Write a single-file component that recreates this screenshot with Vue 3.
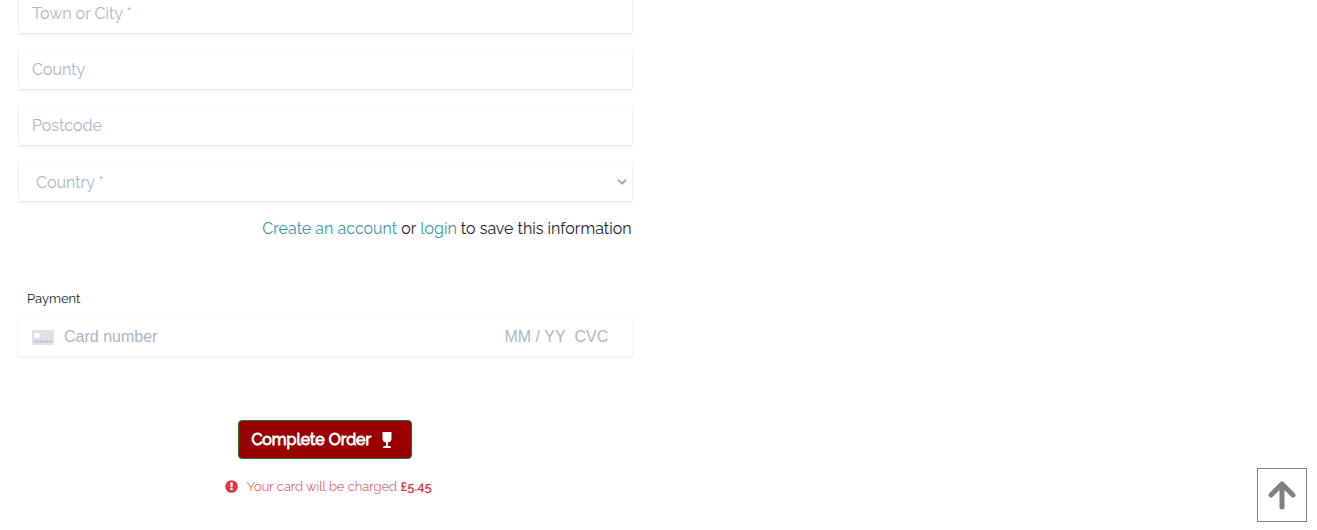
<script setup>
import { ref } from 'vue'

const fields = [
  { id: 'town', label: 'Town or City *' },
  { id: 'county', label: 'County' },
  { id: 'postcode', label: 'Postcode' },
]
const country = ref('')
const total = '£5.45'
const toTop = () => window.scrollTo({ top: 0, behavior: 'smooth' })
</script>

<template>
  <main class="checkout">
    <form class="form" @submit.prevent>
      <div class="fields">
        <input
          v-for="field in fields"
          :id="field.id"
          :key="field.id"
          class="field"
          type="text"
          :placeholder="field.label"
          :aria-label="field.label"
        />
        <div class="select-wrap">
          <select id="country" v-model="country" class="field select" aria-label="Country">
            <option value="">Country *</option>
            <option value="GB">United Kingdom</option>
            <option value="IE">Ireland</option>
          </select>
          <svg class="chevron" viewBox="0 0 10 8" aria-hidden="true">
            <path d="M1 1.7 5 5.7 9 1.7" fill="none" stroke="currentColor" stroke-width="2" />
          </svg>
        </div>
      </div>

      <p class="account"><a href="#">Create an account</a> or <a href="#">login</a> to save this information</p>

      <fieldset class="payment">
        <legend class="legend">Payment</legend>
        <div class="card">
          <svg class="card-icon" viewBox="0 0 22 15" aria-hidden="true">
            <rect width="22" height="15" rx="1.5" fill="#dfe1e9" />
            <rect x="2" y="3" width="6" height="5" rx="2" fill="#fff" />
            <path d="M2 11.5h4M7 11.5h4M12 11.5h4M17 11.5h3" stroke="#b4b8c7" stroke-width="1.3" />
          </svg>
          <input class="card-input number" type="text" inputmode="numeric" placeholder="Card number" aria-label="Card number" />
          <input class="card-input expiry" type="text" inputmode="numeric" placeholder="MM / YY" aria-label="Expiry date" />
          <input class="card-input cvc" type="text" inputmode="numeric" placeholder="CVC" aria-label="CVC" />
        </div>
      </fieldset>

      <div class="submit">
        <button class="order" type="submit">
          <span>Complete Order</span>
          <svg class="glass" viewBox="0 0 10 16" aria-hidden="true">
            <path d="M.5 0h9v6.500C9.500 8.800 8.200 10.200 6 10.600V14h1.800c.8 0 1.200.7 1.200 2H1c0-1.300.4-2 1.200-2H4v-3.400C1.800 10.200.5 8.800.5 6.500Z" fill="#fff" />
          </svg>
        </button>
        <p class="charge">
          <svg class="alert" viewBox="0 0 512 512" aria-hidden="true">
            <circle cx="256" cy="256" r="248" fill="#dc3545" />
            <path d="M206 100h100l-12 190h-76Z" fill="#fff" />
            <circle cx="256" cy="357" r="48" fill="#fff" />
          </svg>
          <span>Your card will be charged <strong>{{ total }}</strong></span>
        </p>
      </div>
    </form>

    <button class="top" type="button" aria-label="Back to top" @click="toTop">
      <svg class="arrow" viewBox="0 0 28 30" aria-hidden="true">
        <path d="M3 15 14 4 25 15M14 5v22" fill="none" stroke="#808080" stroke-width="5" stroke-linecap="round" stroke-linejoin="round" />
      </svg>
    </button>
  </main>
</template>

<style>
body {
  margin: 0;
  background: #fff;
}
</style>

<style scoped>
.checkout {
  font-family: Raleway, Lato, sans-serif;
  font-size: 16px;
  font-weight: 400;
  line-height: 24px;
  color: #212529;
}

.form {
  box-sizing: border-box;
  width: 50%;
  margin-top: -7px;
  padding: 0 27px 0 19px;
}

.fields {
  display: flex;
  flex-direction: column;
  gap: 16px;
}

.field {
  box-sizing: border-box;
  display: block;
  width: 100%;
  height: 40px;
  margin: 0;
  padding: 0 12px;
  border: 1px solid transparent;
  border-radius: 0;
  background: #fff;
  font: inherit;
  color: #aab7c4;
  box-shadow: 0 1px 3px 0 #dadde8;
}

.field::placeholder,
.card-input::placeholder {
  color: #aab7c4;
  opacity: 1;
}

.select-wrap {
  position: relative;
}

.select {
  appearance: none;
  padding: 3px 16px 0;
}

.chevron {
  position: absolute;
  top: 17px;
  right: 5px;
  width: 10px;
  height: 8px;
  color: #a5abb4;
  pointer-events: none;
}

.account {
  margin: 16px 0 0;
  text-align: right;
}

.account a {
  color: #3c99a8;
  text-decoration: none;
}

.payment {
  min-width: 0;
  margin: 48px 0 0;
  padding: 0;
  border: 0;
}

.legend {
  padding: 0 8px;
  font-size: 13px;
  line-height: 20px;
}

.card {
  display: flex;
  align-items: center;
  box-sizing: border-box;
  height: 40px;
  margin-top: 7px;
  padding: 2px 11px 0 13px;
  box-shadow: 0 1px 3px 0 #e9ebf0;
}

.card-icon {
  flex: none;
  width: 22px;
  height: 15px;
  margin-right: 10px;
}

.card-input {
  box-sizing: border-box;
  min-width: 0;
  padding: 0;
  border: 0;
  background: transparent;
  font: 16px "Liberation Sans", Arial, sans-serif;
}

.number {
  flex: 1;
}

.expiry {
  width: 70px;
}

.cvc {
  width: 46px;
}

.submit {
  display: flex;
  flex-direction: column;
  align-items: center;
  margin-top: 64px;
}

.order {
  display: flex;
  align-items: center;
  gap: 11px;
  box-sizing: border-box;
  height: 39px;
  padding: 0 19px 0 12px;
  border: 1px solid #28752d;
  border-radius: 4px;
  background: #990000;
  font: inherit;
  -webkit-text-stroke: 1px currentColor;
  color: #fff;
  cursor: pointer;
}

.glass {
  width: 10px;
  height: 16px;
}

.charge {
  display: flex;
  align-items: center;
  gap: 9px;
  margin: 17px 0 0;
  padding-left: 6px;
  font-size: 13px;
  font-weight: 300;
  line-height: 21px;
  color: #dc3545;
}

.charge strong {
  font-weight: 600;
}

.alert {
  width: 13px;
  height: 13px;
}

.top {
  position: fixed;
  right: 10px;
  bottom: 8px;
  display: flex;
  align-items: center;
  justify-content: center;
  width: 50px;
  height: 54px;
  padding: 0;
  border: 1px solid #808080;
  background: #fff;
  cursor: pointer;
}

.arrow {
  width: 28px;
  height: 30px;
}
</style>
